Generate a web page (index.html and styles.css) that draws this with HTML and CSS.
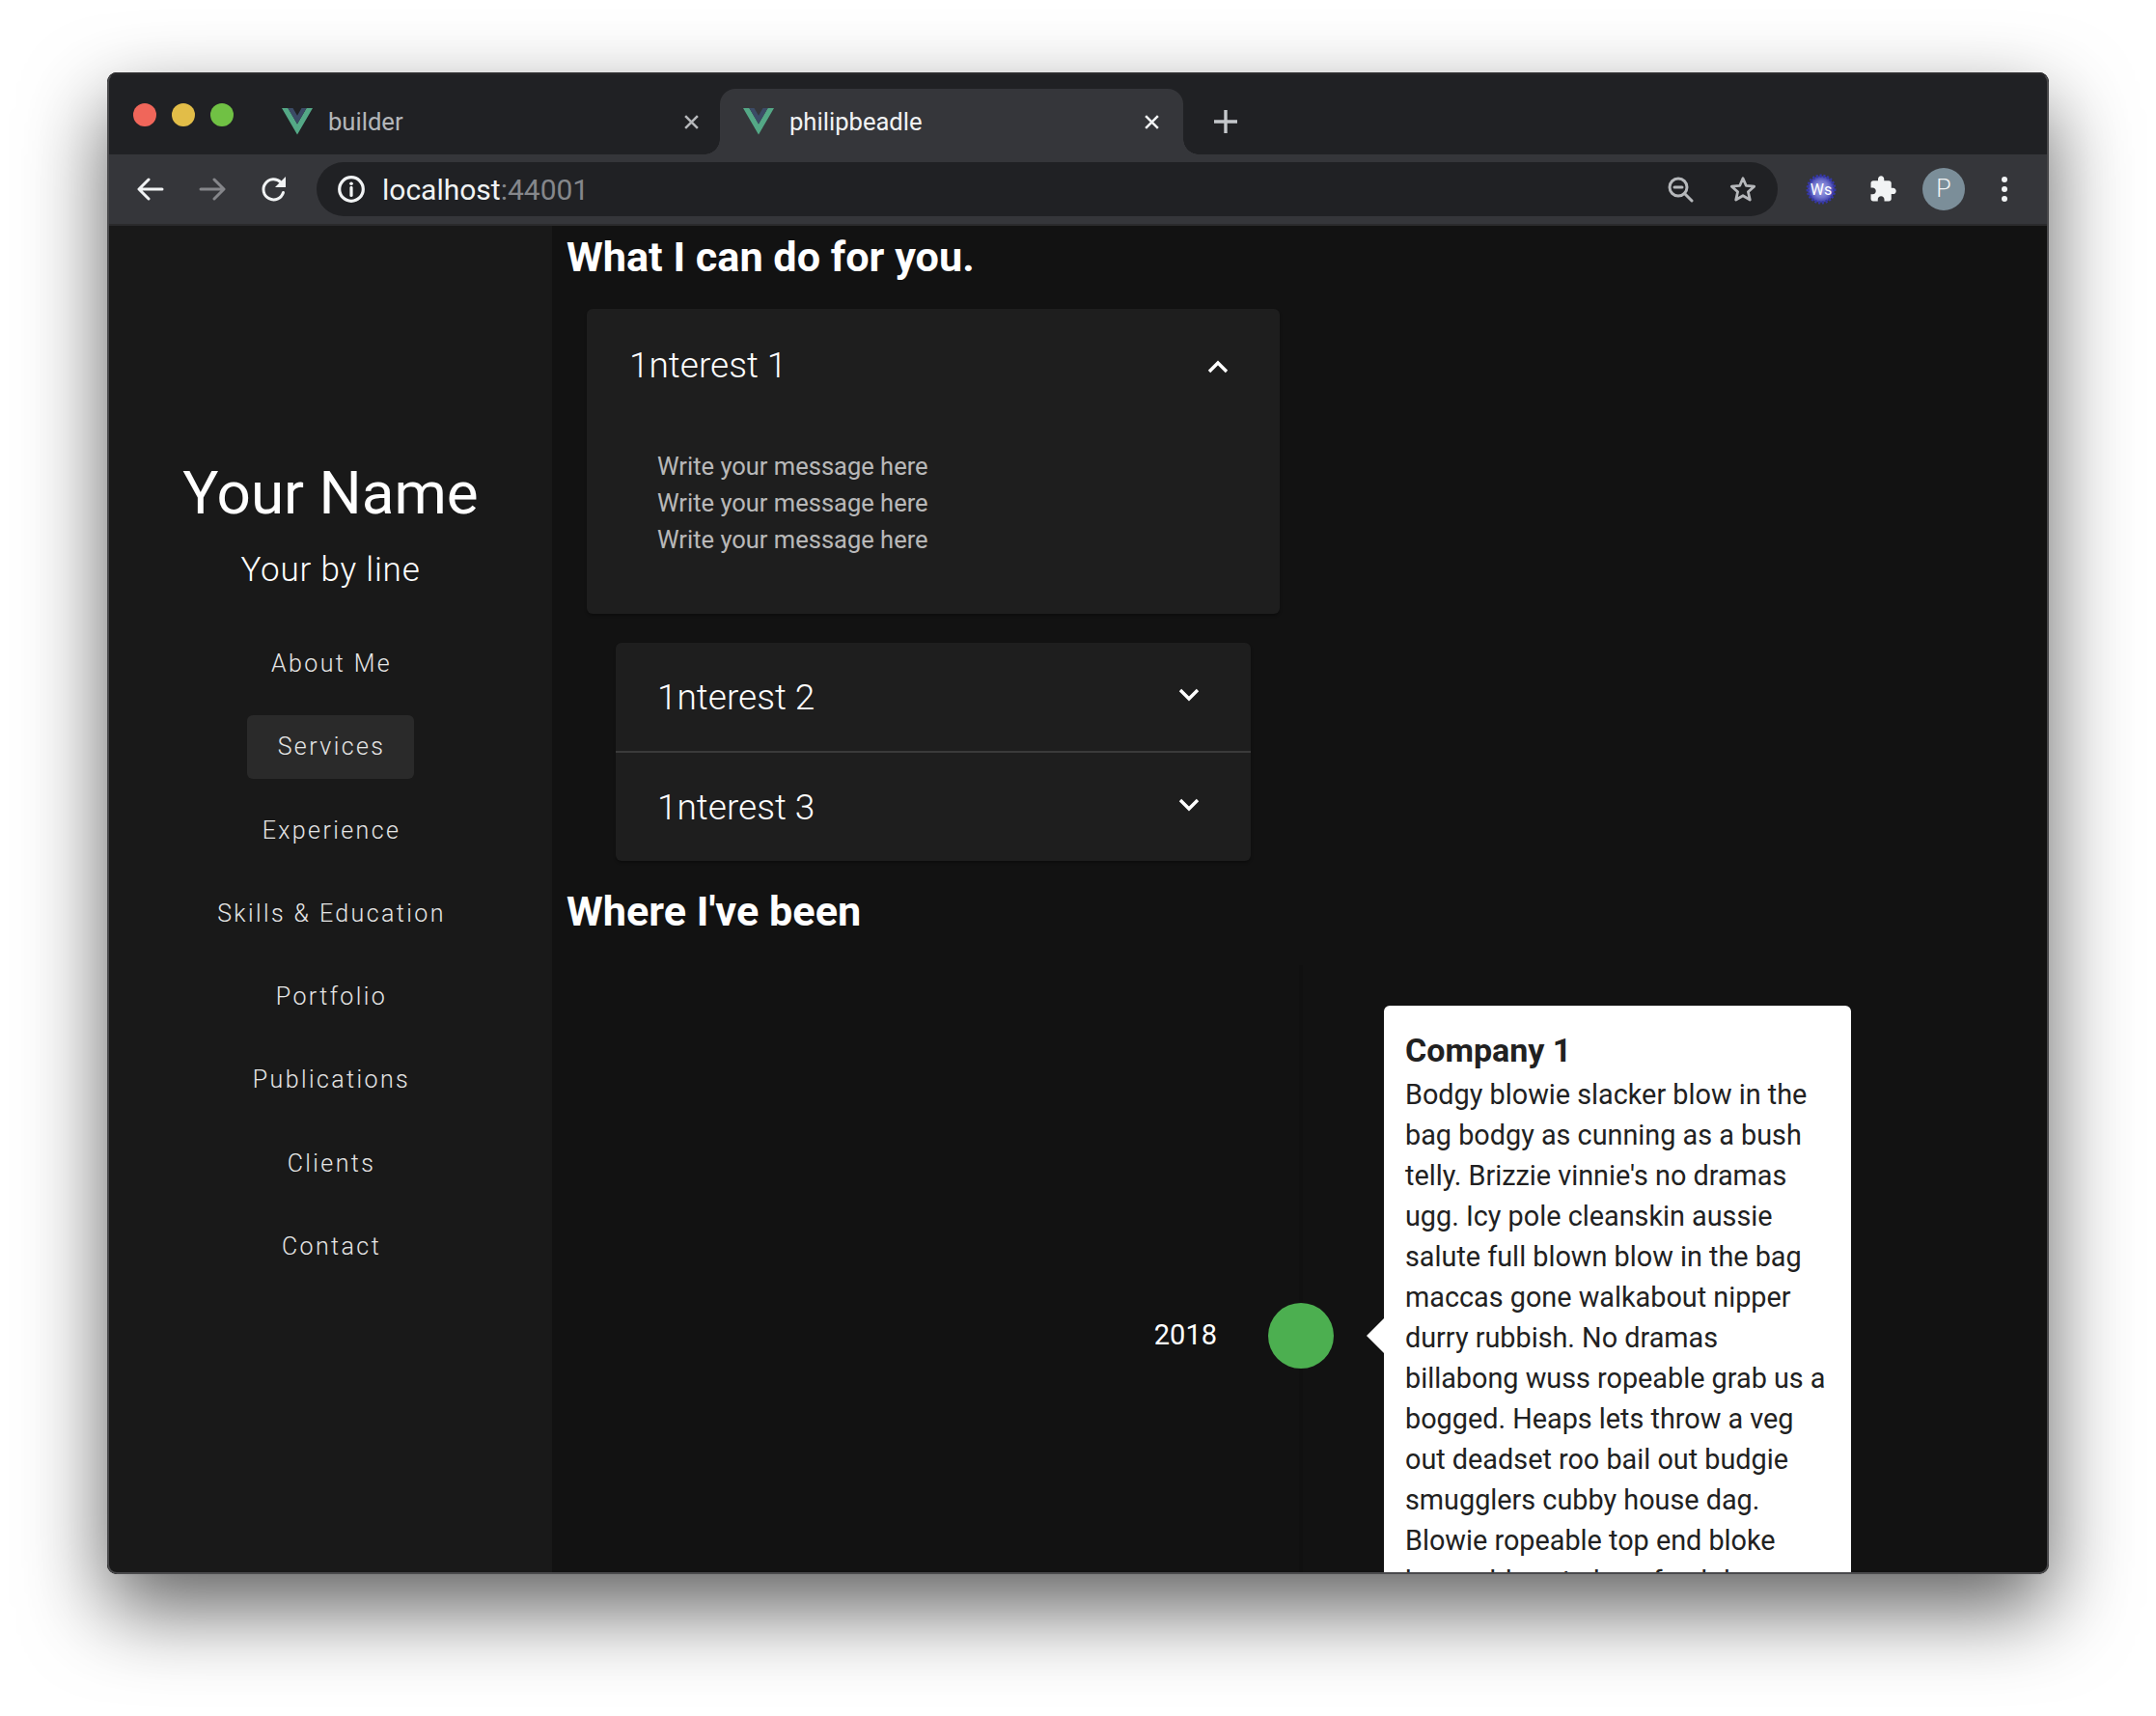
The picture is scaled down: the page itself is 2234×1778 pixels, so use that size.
FILE: index.html

```html
<!DOCTYPE html>
<html lang="en">
<head>
  <meta charset="UTF-8">
  <title>philipbeadle</title>
  <link rel="stylesheet" href="styles.css">
</head>
<body>
  <div class="window">
    <div class="tabbar">
      <div class="lights">
        <span class="light red"></span>
        <span class="light yellow"></span>
        <span class="light green"></span>
      </div>
      <div class="tab">
        <svg class="favicon" viewBox="0 0 32 28"><polygon fill="#54a886" points="0,0 6.4,0 16,16.5 25.6,0 32,0 16,27.5"/><polygon fill="#3b4b66" points="6.4,0 11.5,0 16,7.7 20.5,0 25.6,0 16,16.5"/></svg>
        <span class="tab-title">builder</span>
        <svg class="tab-close" viewBox="0 0 16 16"><path d="M2 2 14 14M14 2 2 14"/></svg>
      </div>
      <div class="tab active">
        <svg class="favicon" viewBox="0 0 32 28"><polygon fill="#54a886" points="0,0 6.4,0 16,16.5 25.6,0 32,0 16,27.5"/><polygon fill="#3b4b66" points="6.4,0 11.5,0 16,7.7 20.5,0 25.6,0 16,16.5"/></svg>
        <span class="tab-title">philipbeadle</span>
        <svg class="tab-close" viewBox="0 0 16 16"><path d="M2 2 14 14M14 2 2 14"/></svg>
      </div>
      <svg class="new-tab" viewBox="0 0 24 24"><path d="M12 0V24M0 12H24"/></svg>
    </div>

    <div class="toolbar">
      <button class="tool"><svg viewBox="0 0 28 24"><path class="line" d="M26 12H3M12 2 2 12 12 22"/></svg></button>
      <button class="tool dim"><svg viewBox="0 0 28 24"><path class="line" d="M2 12H25M16 2 26 12 16 22"/></svg></button>
      <button class="tool"><svg viewBox="0 0 28 28"><path class="line" d="M23.5 17.5A10.5 10.5 0 1 1 21 7"/><polygon class="fill" points="26,1 26,12 15,12"/></svg></button>
      <div class="omnibox">
        <svg class="info" viewBox="0 0 28 28"><circle class="line" cx="14" cy="14" r="11.5"/><path class="line" d="M14 12.5V20"/><circle class="fill" cx="14" cy="8.6" r="1.7"/></svg>
        <span class="url">localhost<span class="port">:44001</span></span>
        <button class="tool push"><svg viewBox="0 0 28 28"><circle class="line grey" cx="12" cy="12" r="9"/><path class="line grey" d="M8 12H16M18.5 18.5 26 26"/></svg></button>
        <button class="tool star"><svg viewBox="0 0 30 30"><polygon class="line grey" points="15,3 18.6,11.2 27.5,12 20.8,18 22.8,26.8 15,22.2 7.2,26.8 9.2,18 2.5,12 11.4,11.2"/></svg></button>
      </div>
      <div class="tool ws">
        <svg viewBox="0 0 30 30"><defs><radialGradient id="wsfill"><stop offset="0" stop-color="#a4a7e6"/><stop offset="0.6" stop-color="#7477cf"/><stop offset="1" stop-color="#3b3ca8"/></radialGradient></defs><circle cx="15" cy="15" r="13" fill="url(#wsfill)" stroke="#3638a5" stroke-width="3" stroke-dasharray="2 1.5"/></svg>
        <span class="ws-text">Ws</span>
      </div>
      <button class="tool puzzle"><svg viewBox="0 0 24 24"><path fill="#f1f3f4" d="M20.5 11H19V7c0-1.1-.9-2-2-2h-4V3.5C13 2.12 11.88 1 10.5 1S8 2.12 8 3.5V5H4c-1.1 0-1.99.9-1.99 2v3.8H3.5c1.49 0 2.7 1.21 2.7 2.7s-1.21 2.7-2.7 2.7H2V20c0 1.1.9 2 2 2h3.8v-1.5c0-1.49 1.21-2.7 2.7-2.7 1.49 0 2.7 1.21 2.7 2.7V22H17c1.1 0 2-.9 2-2v-4h1.5c1.38 0 2.5-1.12 2.5-2.5S21.88 11 20.5 11z"/></svg></button>
      <div class="tool"><span class="avatar">P</span></div>
      <button class="tool"><svg viewBox="0 0 8 32"><circle class="fill" cx="4" cy="6" r="3"/><circle class="fill" cx="4" cy="16" r="3"/><circle class="fill" cx="4" cy="26" r="3"/></svg></button>
    </div>

    <div class="page">
      <aside class="sidebar">
        <h1 class="name">Your Name</h1>
        <p class="byline">Your by line</p>
        <nav class="nav">
          <a>About Me</a>
          <a class="current">Services</a>
          <a>Experience</a>
          <a>Skills &amp; Education</a>
          <a>Portfolio</a>
          <a>Publications</a>
          <a>Clients</a>
          <a>Contact</a>
        </nav>
      </aside>

      <main class="main">
        <h2 class="heading">What I can do for you.</h2>

        <section class="panel panel-open">
          <div class="panel-head head-open">
            <span>1nterest 1</span>
            <svg class="chevron" viewBox="0 0 22 14"><path d="M2 12 11 3 20 12"/></svg>
          </div>
          <div class="panel-body">
            <div>Write your message here</div>
            <div>Write your message here</div>
            <div>Write your message here</div>
          </div>
        </section>

        <section class="panel panel-group">
          <div class="panel-head">
            <span>1nterest 2</span>
            <svg class="chevron" viewBox="0 0 22 14"><path d="M2 2 11 11 20 2"/></svg>
          </div>
          <div class="panel-head">
            <span>1nterest 3</span>
            <svg class="chevron" viewBox="0 0 22 14"><path d="M2 2 11 11 20 2"/></svg>
          </div>
        </section>

        <h2 class="heading heading-two">Where I've been</h2>

        <section class="timeline">
          <div class="year">2018</div>
          <div class="dot"></div>
          <div class="entry">
            <h3>Company 1</h3>
            <p>Bodgy blowie slacker blow in the bag bodgy as cunning as a bush telly. Brizzie vinnie's no dramas ugg. Icy pole cleanskin aussie salute full blown blow in the bag maccas gone walkabout nipper durry rubbish. No dramas billabong wuss ropeable grab us a bogged. Heaps lets throw a veg out deadset roo bail out budgie smugglers cubby house dag. Blowie ropeable top end bloke bogan bluey to be a feral dag as dry as a dead dingo's donger mate.</p>
          </div>
        </section>
      </main>
    </div>
  </div>
</body>
</html>
```

FILE: styles.css

```css
html, body {
  margin: 0;
  height: 100%;
}
body {
  padding: 75px 111px 0 111px;
  box-sizing: border-box;
  height: 1778px;
  background: #fff;
  font-family: Roboto, "Liberation Sans", sans-serif;
  overflow: hidden;
}
.window {
  position: relative;
  height: 1556px;
  border-radius: 10px;
  overflow: hidden;
  background: #121212;
}
body::before {
  content: "";
  position: absolute;
  left: 111px;
  top: 75px;
  width: 2012px;
  height: 1556px;
  border-radius: 10px;
  box-shadow: 0 36px 85px rgba(0, 0, 0, 0.62);
}
.window::after {
  content: "";
  position: absolute;
  inset: 0;
  border: 2px solid #4a4a4c;
  border-top-color: #2b2b2d;
  border-radius: 10px;
  pointer-events: none;
}

/* tab strip */
.tabbar {
  display: flex;
  align-items: flex-end;
  height: 85px;
  background: #202124;
}
.lights {
  display: flex;
  gap: 16px;
  align-self: flex-start;
  margin: 32px 26px 0 27px;
}
.light {
  width: 24px;
  height: 24px;
  border-radius: 50%;
}
.red { background: #f0665a; }
.yellow { background: #e2bd48; }
.green { background: #70c144; }
.tab {
  position: relative;
  display: flex;
  align-items: center;
  box-sizing: border-box;
  width: 478px;
  height: 68px;
  padding: 0 21px 0 24px;
  color: #b4b6b9;
  font-size: 25.6px;
}
.tab.active {
  background: #35363a;
  color: #f1f3f4;
  width: 480px;
  padding-right: 24px;
  border-radius: 16px 16px 0 0;
}
.tab.active::before,
.tab.active::after {
  content: "";
  position: absolute;
  bottom: 0;
  width: 16px;
  height: 16px;
}
.tab.active::before {
  left: -16px;
  background: radial-gradient(circle at 0 0, #202124 15.5px, #35363a 16px);
}
.tab.active::after {
  right: -16px;
  background: radial-gradient(circle at 100% 0, #202124 15.5px, #35363a 16px);
}
.favicon {
  width: 32px;
  height: 28px;
  flex: none;
}
.tab-title {
  margin-left: 16px;
  flex: 1;
}
.tab-close {
  width: 17px;
  height: 17px;
  fill: none;
  stroke: currentColor;
  stroke-width: 2.4;
}
.new-tab {
  width: 24px;
  height: 24px;
  margin: 0 0 22px 32px;
  fill: none;
  stroke: #c4c7cb;
  stroke-width: 3.4;
}

/* toolbar */
.toolbar {
  display: flex;
  align-items: center;
  box-sizing: border-box;
  height: 74px;
  padding: 0 0 0 13px;
  background: #35363a;
  border-bottom: 2px solid #2a2a2c;
}
.tool {
  position: relative;
  display: flex;
  align-items: center;
  justify-content: center;
  flex: none;
  width: 64px;
  height: 48px;
  padding: 0;
  border: 0;
  background: none;
}
.tool svg {
  height: 28px;
  width: 28px;
}
.line {
  fill: none;
  stroke: #f1f3f4;
  stroke-width: 3;
  stroke-linecap: round;
  stroke-linejoin: round;
}
.line.grey {
  stroke: #b6b8bb;
}
.fill {
  fill: #f1f3f4;
}
.dim .line {
  stroke: #85868a;
}
.omnibox {
  display: flex;
  align-items: center;
  box-sizing: border-box;
  flex: none;
  width: 1514px;
  height: 56px;
  margin: 0 13px 0 12px;
  padding: 0 5px 0 21px;
  border-radius: 28px;
  background: #202124;
  color: #f1f3f4;
  font-size: 30px;
}
.info {
  width: 30px;
  height: 30px;
}
.url {
  margin-left: 17px;
}
.port {
  color: #85878b;
}
.push {
  margin-left: auto;
}
.star {
  left: 1px;
}
.ws svg {
  width: 32px;
  height: 32px;
}
.ws-text {
  position: absolute;
  inset: 0;
  display: flex;
  align-items: center;
  justify-content: center;
  color: #fff;
  font-size: 16px;
  font-weight: 400;
}
.tool.puzzle svg {
  width: 30px;
  height: 30px;
}
.avatar {
  display: block;
  width: 44px;
  height: 44px;
  margin-left: -2px;
  border-radius: 50%;
  background: #7b8e99;
  color: #f1f3f4;
  font-size: 25px;
  font-weight: 300;
  line-height: 44px;
  text-align: center;
}
.toolbar > .tool:last-child {
  margin-left: -2px;
}
.toolbar > .tool:last-child svg {
  width: 8px;
  height: 32px;
}

/* page */
.page {
  display: flex;
  height: 1397px;
}
.sidebar {
  flex: none;
  box-sizing: border-box;
  width: 461px;
  padding: 237px 0 0 2px;
  background: #191919;
  color: #fff;
  text-align: center;
}
.name {
  margin: 0;
  font-size: 62px;
  font-weight: 400;
  line-height: 80px;
}
.byline {
  margin: 18px 0 0;
  font-size: 35px;
  font-weight: 300;
  letter-spacing: 0.8px;
  line-height: 44px;
}
.nav {
  display: flex;
  flex-direction: column;
  align-items: center;
  gap: 20.3px;
  margin-top: 42px;
}
.nav a {
  box-sizing: border-box;
  height: 66px;
  padding: 0 30px 0 32px;
  border-radius: 6px;
  color: #e6e6e6;
  font-size: 25px;
  font-weight: 300;
  letter-spacing: 2.4px;
  line-height: 66px;
}
.nav a.current {
  background: #2a2a2a;
}
.main {
  flex: 1;
  min-width: 0;
  padding-left: 15px;
  color: #fff;
}
.heading {
  margin: 9px 0 0;
  font-size: 43.2px;
  font-weight: 700;
  line-height: 48px;
}
.heading-two {
  margin-top: 29px;
}
.panel {
  border-radius: 6px;
  background: #1e1e1e;
  box-shadow: 0 2px 3px rgba(0, 0, 0, 0.3);
}
.panel-open {
  width: 718px;
  height: 316px;
  margin: 29px 0 0 21px;
}
.panel-group {
  width: 658px;
  height: 226px;
  margin: 30px 0 0 51px;
}
.panel-head {
  display: flex;
  align-items: center;
  justify-content: space-between;
  box-sizing: border-box;
  height: 112px;
  padding: 0 53px 0 43px;
  font-size: 37px;
  font-weight: 300;
}
.panel-head .chevron {
  margin-top: -5px;
}
.panel-head + .panel-head {
  height: 114px;
  border-top: 2px solid #3a3a3a;
}
.head-open {
  height: 116px;
  padding-right: 53px;
  padding-left: 44px;
}
.head-open .chevron {
  margin-top: 4px;
}
.chevron {
  width: 22px;
  height: 14px;
  fill: none;
  stroke: #fff;
  stroke-width: 3.4;
}
.panel-body {
  padding: 28px 0 0 73px;
  color: rgba(255, 255, 255, 0.7);
  font-size: 25.5px;
  font-weight: 400;
  line-height: 38px;
}

/* timeline */
.timeline {
  position: relative;
  display: grid;
  grid-template-columns: 674px 173px 484px;
  align-items: center;
  margin-top: 31px;
  padding-top: 42px;
}
.timeline::before {
  content: "";
  position: absolute;
  left: 759px;
  top: 0;
  bottom: 0;
  width: 4px;
  background: #101010;
}
.year {
  position: relative;
  margin-bottom: 2px;
  font-size: 29px;
  text-align: right;
}
.dot {
  position: relative;
  width: 68px;
  height: 68px;
  margin-left: 53px;
  border-radius: 50%;
  background: #4caf50;
}
.entry {
  position: relative;
  box-sizing: border-box;
  height: 684px;
  padding: 21px 22px 0;
  border-radius: 6px;
  background: #fff;
  color: #212121;
}
.entry::before {
  content: "";
  position: absolute;
  left: -18px;
  top: 324px;
  border-top: 18px solid transparent;
  border-bottom: 18px solid transparent;
  border-right: 18px solid #fff;
}
.entry h3 {
  margin: 0;
  font-size: 34px;
  font-weight: 700;
  line-height: 50px;
}
.entry p {
  margin: 0;
  font-size: 28.8px;
  line-height: 42px;
}
```
